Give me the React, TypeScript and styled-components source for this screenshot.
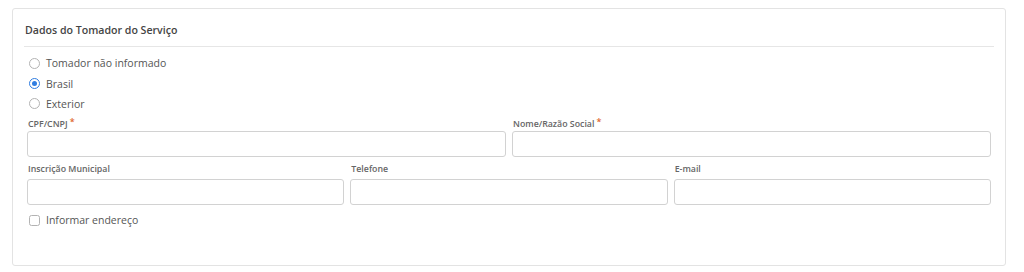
import React from "react";
import styled, { createGlobalStyle } from "styled-components";

const Global = createGlobalStyle`
  html, body { margin: 0; padding: 0; background: #ffffff; }
  body { font-family: "Open Sans", "Noto Sans", sans-serif; color: #444; }
  * { box-sizing: border-box; }
`;

const Page = styled.div`
  padding: 8px 18px 6px 12px;
`;

const Card = styled.section`
  border: 1px solid #e3e3e3;
  border-radius: 3px;
  padding: 11px;
  height: 258px;
`;

const Header = styled.h2`
  margin: 0;
  font-size: 10.6px;
  font-weight: 600;
  color: #444;
  padding: 3px 0 8px 1px;
  border-bottom: 1px solid #e6e6e6;
  line-height: 15px;
`;

const Body = styled.div`
  padding: 6px 3px 0 3px;
  display: flex;
  flex-direction: column;
`;

const OptionList = styled.div`
  display: flex;
  flex-direction: column;
`;

const Option = styled.label`
  display: flex;
  align-items: center;
  height: 20.4px;
  font-size: 10.5px;
  color: #555;
  gap: 6px;
  padding-left: 2px;
`;

const Radio = styled.span<{ $checked?: boolean }>`
  width: 11px;
  height: 11px;
  border-radius: 50%;
  border: ${(p) => (p.$checked ? "1.5px solid #2f7de1" : "1px solid #b3b3b3")};
  display: inline-flex;
  align-items: center;
  justify-content: center;
  flex: none;
  &::after {
    content: "";
    width: 5px;
    height: 5px;
    border-radius: 50%;
    background: ${(p) => (p.$checked ? "#2f7de1" : "transparent")};
  }
`;

const Check = styled.span`
  width: 11px;
  height: 11px;
  border-radius: 2.5px;
  border: 1px solid #b3b3b3;
  flex: none;
`;

const Row = styled.div<{ $cols: number; $gapTop: number }>`
  display: grid;
  grid-template-columns: repeat(${(p) => p.$cols}, 1fr);
  column-gap: 6px;
  margin-top: ${(p) => p.$gapTop}px;
`;

const Field = styled.div`
  display: flex;
  flex-direction: column;
`;

const Label = styled.span`
  font-size: 8.8px;
  font-weight: 600;
  color: #666;
  height: 17px;
  line-height: 15px;
  padding-left: 1px;
`;

const Req = styled.span`
  color: #e0662d;
  font-size: 9px;
  margin-left: 2px;
  vertical-align: 2px;
`;

const Input = styled.input`
  height: 26px;
  border: 1px solid #d2d2d2;
  border-radius: 3px;
  width: 100%;
  outline: none;
  font-family: inherit;
  margin-bottom: 2px;
`;

const CheckRow = styled(Option)`
  margin-top: 3px;
`;

export default function App() {
  return (
    <>
      <Global />
      <Page>
        <Card>
          <Header>Dados do Tomador do Serviço</Header>
          <Body>
            <OptionList>
              <Option><Radio />Tomador não informado</Option>
              <Option><Radio $checked />Brasil</Option>
              <Option><Radio />Exterior</Option>
            </OptionList>
            <Row $cols={2} $gapTop={0}>
              <Field>
                <Label>CPF/CNPJ<Req>*</Req></Label>
                <Input />
              </Field>
              <Field>
                <Label>Nome/Razão Social<Req>*</Req></Label>
                <Input />
              </Field>
            </Row>
            <Row $cols={3} $gapTop={3}>
              <Field>
                <Label>Inscrição Municipal</Label>
                <Input />
              </Field>
              <Field>
                <Label>Telefone</Label>
                <Input />
              </Field>
              <Field>
                <Label>E-mail</Label>
                <Input />
              </Field>
            </Row>
            <CheckRow><Check />Informar endereço</CheckRow>
          </Body>
        </Card>
      </Page>
    </>
  );
}
